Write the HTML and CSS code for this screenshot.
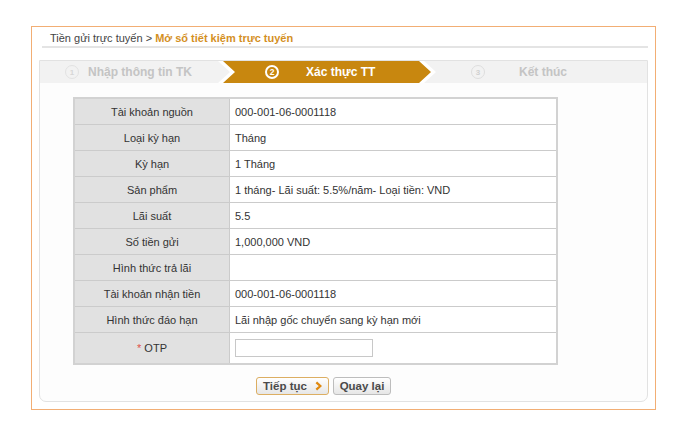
FILE: index.html
```html
<!DOCTYPE html>
<html lang="vi">
<head>
<meta charset="utf-8">
<title>Mở sổ tiết kiệm trực tuyến</title>
<link rel="stylesheet" href="styles.css">
</head>
<body>
<div class="frame">
  <div class="crumb">Tiền gửi trực tuyến &gt; <span class="crumb-current">Mở sổ tiết kiệm trực tuyến</span></div>
  <div class="panel">
    <div class="steps">
      <div class="step step-done">
        <span class="num">1</span><span class="label">Nhập thông tin TK</span>
      </div>
      <div class="step-edge">
        <div class="step step-active">
          <span class="num">2</span><span class="label">Xác thực TT</span>
        </div>
      </div>
      <div class="step step-next">
        <span class="num">3</span><span class="label">Kết thúc</span>
      </div>
    </div>

    <table class="info">
      <tr><td class="k">Tài khoản nguồn</td><td class="v">000-001-06-0001118</td></tr>
      <tr><td class="k">Loại kỳ hạn</td><td class="v">Tháng</td></tr>
      <tr><td class="k">Kỳ hạn</td><td class="v">1 Tháng</td></tr>
      <tr><td class="k">Sản phẩm</td><td class="v">1 tháng- Lãi suất: 5.5%/năm- Loại tiền: VND</td></tr>
      <tr><td class="k">Lãi suất</td><td class="v">5.5</td></tr>
      <tr><td class="k">Số tiền gửi</td><td class="v">1,000,000 VND</td></tr>
      <tr><td class="k">Hình thức trả lãi</td><td class="v"></td></tr>
      <tr><td class="k">Tài khoản nhận tiền</td><td class="v">000-001-06-0001118</td></tr>
      <tr><td class="k">Hình thức đáo hạn</td><td class="v">Lãi nhập gốc chuyển sang kỳ hạn mới</td></tr>
      <tr class="otp-row"><td class="k"><span class="req">*</span> OTP</td><td class="v"><input class="otp" type="text"></td></tr>
    </table>

    <div class="actions">
      <button class="btn btn-primary" type="button"><span>Tiếp tục</span><svg class="chev" width="8" height="10" viewBox="0 0 8 10"><path d="M1.5 1 L6 5 L1.5 9" fill="none" stroke="#e08a10" stroke-width="2.6"/></svg></button>
      <button class="btn" type="button">Quay lại</button>
    </div>
  </div>
</div>
</body>
</html>
```

FILE: styles.css
```css
html, body {
  margin: 0;
  padding: 0;
  background: #ffffff;
}
body {
  font-family: "Liberation Sans", Arial, sans-serif;
  font-size: 11px;
  color: #333333;
}
.frame {
  box-sizing: border-box;
  margin: 26px 0 0 31px;
  width: 625px;
  height: 384px;
  border: 1px solid #f2ae74;
}
.crumb {
  margin: 0 7px 0 10px;
  padding: 4px 0 1px 8px;
  line-height: 14px;
  font-size: 11px;
  color: #444;
  border-bottom: 2px solid #e4e4e4;
}
.crumb-current {
  color: #d4901f;
  font-weight: bold;
}
.panel {
  box-sizing: border-box;
  margin: 12px 7px 0 7px;
  height: 342px;
  border: 1px solid #e2e2e2;
  border-radius: 0 0 7px 7px;
  background: #fdfdfd;
}
.steps {
  display: flex;
  height: 22px;
  background: #f2f2f2;
}
.step {
  display: flex;
  align-items: center;
  height: 22px;
  font-size: 12px;
  font-weight: bold;
  white-space: nowrap;
}
.num {
  box-sizing: border-box;
  width: 14px;
  height: 14px;
  border-radius: 50%;
  display: inline-flex;
  align-items: center;
  justify-content: center;
  font-size: 8px;
  font-weight: bold;
}
.step-done {
  width: 178px;
  padding-left: 25px;
  box-sizing: border-box;
  color: #c4c4c4;
}
.step-done .num {
  border: 1.5px solid #e2e2e2;
  color: #d6d6d6;
}
.step-done .label { margin-left: 9px; }
.step-edge {
  width: 218px;
  height: 22px;
  background: #ffffff;
  clip-path: polygon(0 0, calc(100% - 12px) 0, 100% 50%, calc(100% - 12px) 100%, 0 100%, 12px 50%);
}
.step-active {
  margin: 0 5px;
  padding-left: 42px;
  background: #c8870f;
  color: #ffffff;
  clip-path: polygon(0 0, calc(100% - 12px) 0, 100% 50%, calc(100% - 12px) 100%, 0 100%, 12px 50%);
}
.step-active .num {
  border: 2px solid #ffffff;
  color: #ffffff;
  font-size: 8.5px;
}
.step-active .label { margin-left: 27px; }
.step-next {
  flex: 1;
  padding-left: 35px;
  color: #c4c4c4;
}
.step-next .num {
  border: 1.5px solid #dedede;
  color: #d0d0d0;
}
.step-next .label { margin-left: 34px; }

.info {
  margin: 14px 0 0 33px;
  width: 485px;
  border-collapse: collapse;
  border: 2px solid #d2d2d2;
}
.info td {
  border: 1px solid #cbcbcb;
  height: 25px;
  padding: 0;
  font-size: 11px;
  line-height: 14px;
}
.info .k {
  width: 154px;
  background: #e1e1e1;
  text-align: center;
  color: #333;
}
.info .v {
  background: #ffffff;
  padding-left: 5px;
  color: #333;
}
.otp-row td { height: 30px; }
.req {
  color: #e0504a;
}
.otp {
  box-sizing: border-box;
  display: block;
  width: 138px;
  height: 18px;
  margin: 0;
  border: 1px solid #c8c8c8;
  background: #fff;
  padding: 0 3px;
}
.actions {
  display: flex;
  gap: 4px;
  margin: 12px 0 0 216px;
}
.btn {
  box-sizing: border-box;
  height: 18px;
  padding: 0 6px;
  display: inline-flex;
  align-items: center;
  justify-content: center;
  gap: 8px;
  white-space: nowrap;
  font-family: "Liberation Sans", Arial, sans-serif;
  font-size: 11.5px;
  font-weight: bold;
  color: #4a4a4a;
  border: 1px solid #bdbdbd;
  border-radius: 3px;
  background: linear-gradient(#ffffff, #e6e6e6);
}
.btn-primary {
  width: 73px;
  border-color: #dcae62;
}
.btn:not(.btn-primary) { width: 58px; }
.chev { display: block; }
```
